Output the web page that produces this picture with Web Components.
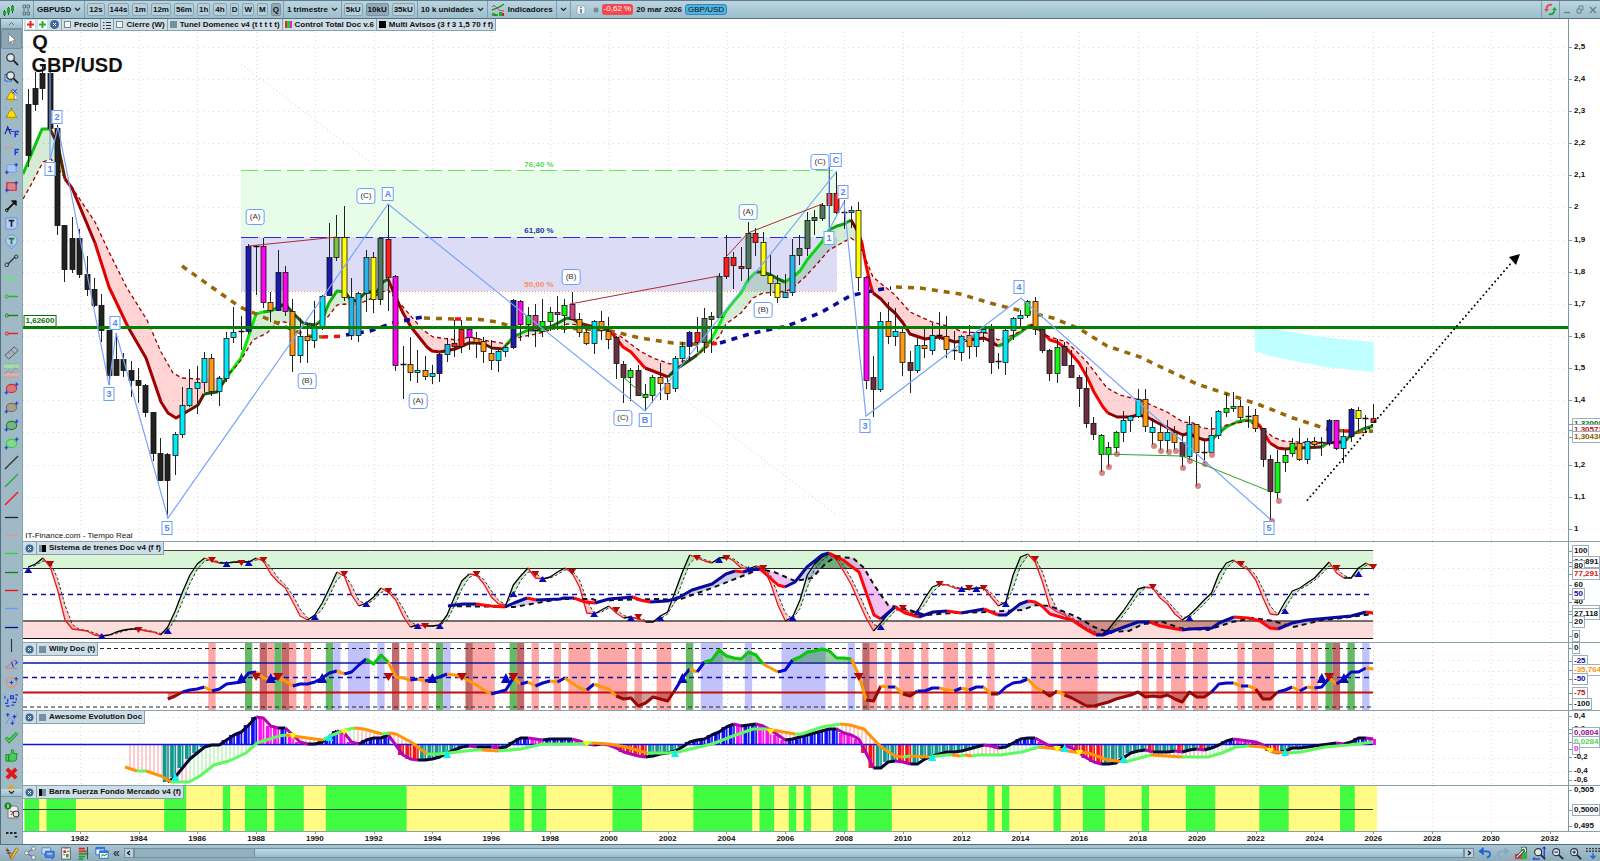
<!DOCTYPE html>
<html lang="es">
<head>
<meta charset="utf-8">
<title>GBPUSD - 1 trimestre</title>
<style>
    html, body { margin: 0; height: 100%; }
    body { font: bold 8px/10px "Liberation Sans", Arial, sans-serif; color: #111; background: #fff; overflow: hidden; }
</style>
</head>
<body>
<trading-window></trading-window>

<script>
// ---------- helpers ----------
const X0 = 28.2, STEP = 7.35;          // first quarter and quarter width
const qx = i => X0 + i * STEP;
const nums = s => s.trim().split(/[\s,]+/).map(Number);
const pairs = s => { const n = nums(s), out = []; for (let i = 0; i < n.length; i += 2) out.push([n[i], n[i + 1]]); return out; };
const series = (start, s) => nums(s).map((y, i) => [qx(start + i), y]);
const pts = list => list.map(p => p[0].toFixed(1) + "," + p[1].toFixed(1)).join(" ");
const line = (list, color, w = 1, extra = "") => `<polyline points="${pts(list)}" fill="none" stroke="${color}" stroke-width="${w}" ${extra}/>`;
const rect = (x, y, w, h, fill, extra = "") => `<rect x="${x}" y="${y}" width="${w}" height="${h}" fill="${fill}" ${extra}/>`;

function at(list, x) {
    if (x <= list[0][0]) return list[0][1];
    for (let i = 1; i < list.length; i++) {
        if (x <= list[i][0]) {
            const a = list[i - 1], b = list[i];
            return a[1] + (b[1] - a[1]) * (x - a[0]) / (b[0] - a[0]);
        }
    }
    return list[list.length - 1][1];
}

// a line whose segments take their colour from a rule
function ruled(list, rule, w) {
    let out = "", run = [list[0]], color = null;
    for (let i = 1; i < list.length; i++) {
        const c = rule(list[i - 1], list[i]);
        if (color && c !== color) {
            out += line(run, color, w, 'stroke-linejoin="round"');
            run = [list[i - 1]];
        }
        color = c;
        run.push(list[i]);
    }
    return out + line(run, color, w, 'stroke-linejoin="round"');
}

// fills the space between two lines: one colour when a is over b, other when under
function between(a, b, over, under) {
    const from = Math.max(a[0][0], b[0][0]);
    const to = Math.min(a[a.length - 1][0], b[b.length - 1][0]);
    let out = "", top = [], low = [], sign = 0;
    const flush = () => {
        const color = sign > 0 ? over : under;
        if (top.length > 1 && color !== "none") out += `<polygon points="${pts(top)} ${pts(low.reverse())}" fill="${color}"/>`;
    };
    for (let x = from; x <= to; x += 1) {
        const ya = at(a, x), yb = at(b, x), s = ya <= yb ? 1 : -1;
        if (s !== sign) {
            flush();
            top = []; low = [];
            sign = s;
        }
        top.push([x, ya]);
        low.push([x, yb]);
    }
    flush();
    return out;
}

const up = (x, y, w, h, c) => `<polygon points="${x - w},${y + h} ${x + w},${y + h} ${x},${y - h}" fill="${c}"/>`;
const down = (x, y, w, h, c) => `<polygon points="${x - w},${y - h} ${x + w},${y - h} ${x},${y + h}" fill="${c}"/>`;
const spans = s => s.split(" ").map(t => { const p = t.split("-").map(Number); return [p[0], p[p.length - 1]]; });
const bands = (s, y, h, color) => spans(s).map(([a, b]) => rect((qx(a) - 3.7).toFixed(1), y, ((b - a + 1) * STEP).toFixed(1), h, color)).join("");
const yearGrid = (y1, y2) => {
    let out = "";
    for (let k = 0; k < 26; k++) {
        const x = Math.round(79.7 + 58.8 * k) + 0.5;
        out += `<line x1="${x}" x2="${x}" y1="${y1}" y2="${y2}" stroke="#dcdcdc" stroke-dasharray="1 3"/>`;
    }
    return out;
};
const hGrid = ys => ys.map(y => `<line x1="23" x2="1568" y1="${Math.round(y) + 0.5}" y2="${Math.round(y) + 0.5}" stroke="#dedede" stroke-dasharray="1 4"/>`).join("");
const level = (y, color, w, dash = "") => `<line x1="23" x2="1373" y1="${y}" y2="${y}" stroke="${color}" stroke-width="${w}" ${dash && `stroke-dasharray="${dash}"`}/>`;

function define(name, css, html, cls = class extends HTMLElement {}) {
    const t = document.createElement("template");
    t.innerHTML = `<style>*{box-sizing:border-box}svg{display:block;flex:none}${css}</style>${html}`;
    window.customElements.define(name, class extends cls {
        constructor() {
            super();
            this.attachShadow({ mode: "open" });
            this.shadowRoot.appendChild(t.content.cloneNode(true));
            if (this.ready) this.ready(this.shadowRoot);
        }
    });
}

// ---------- icons ----------
const P = (d, c = "#222", w = 1.3, f = "none") => `<path d="${d}" stroke="${c}" stroke-width="${w}" fill="${f}"/>`;
const plus = (x, y) => P(`M${x - 2} ${y}h4M${x} ${y - 2}v4`, "#1a3ae0", 1.2);
const lens = P("M10 10l5 5", "#222", 2) + '<circle cx="7" cy="7" r="4" fill="#dde9ef" stroke="#333" stroke-width="1.3"/>';
const bell = '<path d="M2 12h12c-2-1-2-3-3-5-1-3-5-3-6 0-1 2-1 4-3 5z" fill="#ffe000" stroke="#8a7400" stroke-width=".8"/><path d="M6.500 3.500h3l-1.500-2z" fill="#8a7400"/><circle cx="8" cy="13.500" r="1.600" fill="#d8b400"/>';
const hline = c => P("M1 8h14", c, 1.4);
const diag = c => P("M1 15L15 1", c, 1.4);
const handle = c => P("M4 8h11", c, 1.5) + `<circle cx="3" cy="8" r="1.700" fill="none" stroke="${c}"/>`;
const oval = (c, f) => `<ellipse cx="8" cy="8" rx="5.500" ry="4.400" fill="${f}" stroke="${c}" stroke-width="1.200"/>` + plus(2.5, 12.5) + plus(13.5, 3.5);
const ICONS = {
    cursor: P("M5 2v10l2.600-2.300 1.800 4 1.500-.7-1.700-3.800h3.300z", "#777", .8, "#fff"),
    lens,
    lensbox: P("M1 6h7v7H1z", "#1a3ae0", 1, "none").replace("/>", ' stroke-dasharray="2 1"/>') + lens,
    bellcut: bell + P("M9 1l5 5M14 1l-5 5", "#1a3ae0", 1) + P("M11 6v7l2-1.500 2 2", "#777", .8, "#fff"),
    bell: bell + P("M1 4l2-2M15 4l-2-2", "#999", 1),
    trendF: P("M1 11l3-8 3 8M3 6h5", "#1a2a90", 1.2) + P("M7 8h4", "#1a3ae0", 1) + P("M12 14V8h4M12 11h3", "#1a3ae0", 1.500),
    lineF: P("M1 5h10", "#e09090", 1.200) + P("M12 13V7h4M12 10h3", "#1a3ae0", 1.500),
    bluebox: P("M3 4h10v8H3z", "#6f9cf0", 1, "#a9c6ec") + plus(3, 12) + plus(13, 4),
    redbox: P("M3 4h10v8H3z", "#e02030", 1.300, "#d08a92") + plus(3, 12) + plus(13, 4),
    arrow: P("M3 13L11 5", "#111", 1.800) + P("M8 3h5v5z", "#111", 1, "#111") + '<circle cx="3" cy="13" r="1.500" fill="none" stroke="#111"/>',
    note: P("M2 2h12v9l-3 3H2z", "#5f94f0", 1, "#b8d0ee") + P("M5 5h6M8 5v6.500", "#222", 1.800),
    balloon: '<circle cx="8" cy="7" r="6" fill="#b8d0ee" stroke="#5f94f0"/>' + P("M6 13l2 3 2-3", "#5f94f0", 1, "#b8d0ee") + P("M5 5h6M8 5v6", "#1d7a2a", 1.800),
    segment: P("M4 12l8-8", "#333", 1.300) + '<circle cx="3" cy="12.500" r="2" fill="none" stroke="#333"/><circle cx="13" cy="4" r="1.800" fill="none" stroke="#333"/>',
    h1: handle("#66ee66"), h2: handle("#22bb22"), h3: handle("#118811"), h4: handle("#ee2020"),
    ruler: P("M1 11L11 2l4 4L5 15z", "#555", 1, "#a6b8c2") + P("M5 8l1.500 1.500M8 5.500l1.500 1.500M11 9l-2-2", "#555", .8),
    bandchart: rect(0, 1, 16, 5, "#a5dca5") + rect(0, 10, 16, 5, "#e8a9a9") + P("M1 12l4-5 3 4 4-6 3 3", "#89a", 1) + P("M0 1h16M0 6h16M0 10h16M0 15h16", "#6a9a7a", .7).replace("/>", ' stroke-dasharray="1 1"/>'),
    o1: oval("#ee2222", "#c88088"), o2: oval("#8a6a40", "#a0a490"), o3: oval("#118822", "#80b090"), o4: oval("#22dd22", "#90d0a0"),
    d1: diag("#333"), d2: diag("#22aa33"), d3: diag("#ff1010"),
    l1: hline("#222"), l2: hline("#f09090"), l3: hline("#20e020"), l4: hline("#0a8a0a"), l5: hline("#f01010"), l6: hline("#6a9af0"), l7: hline("#0a0aa0"),
    vert: P("M8 1v14", "#333", 1.200),
    angle: P("M2 13h12M2 13L12 3", "#e07878", 1.200) + P("M8 6l2 6M12 5l2 2-2 2", "#1a3ae0", 1.200),
    circle: '<circle cx="8" cy="8" r="5.500" fill="none" stroke="#f08a60" stroke-width="1.300"/>' + plus(8, 8) + plus(13, 4),
    fib: P("M1 3v3M4 6v4M1 11h3M7 3h3v3H7zM9 10h4M12 2h3M13 5v3M2 14h4M8 13h3", "#1a3ae0", 1.300),
    wave: P("M2 14l4-7 4 4 4-9", "#7090e0", 1) + plus(4, 4) + plus(11, 6) + plus(9, 13),
    check: P("M2 8l3.500 4L14 3", "#1d8a2a", 3.500) + P("M2 8l3.500 4L14 3", "#46d058", 2),
    thumb: P("M2 7h3v7H2zM5 8l3-3V2c2-1 3 1 2 4h4l-1 7-2 1H5z", "#1d8a2a", 1, "#46d058"),
    cross: P("M3 3l10 10M13 3L3 13", "#e01818", 4)
};
const svg = (body, size = 15) => `<svg width="${size}" height="${size}" viewBox="0 0 16 16" aria-hidden="true">${body}</svg>`;

const CHEV = '<svg width="7" height="5" viewBox="0 0 7 5" aria-hidden="true"><path d="M1 1l2.500 2.500L6 1" fill="none" stroke="#222" stroke-width="1.200"/></svg>';

// ---------- toolbar ----------
define("tf-button", `
    :host { display: block; }
    button { display: block; font: inherit; color: inherit; height: 13px; padding: 0 1px; border: 1px solid #88a5b4; border-radius: 2px; background: #b5cfda; }
    :host([active]) button { background: #8fa9b6; border-color: #7791a0; }`,
    `<button type="button"><slot></slot></button>`);

define("top-toolbar", `
    :host { display: flex; align-items: stretch; height: 19px; border-top: 1px solid #5f7c8c; border-bottom: 1px solid #56707f; background: linear-gradient(#bad5e0, #9dbecc); }
    .group { display: flex; align-items: center; gap: 3px; padding: 0 2px; border-right: 1px solid #809eac; white-space: nowrap; }
    .plain { border-right: 0; }
    .info { padding: 0 5px; }
    button { display: flex; align-items: center; gap: 3px; border: 0; padding: 0 1px; background: none; font: inherit; color: inherit; white-space: nowrap; }
    .tag { padding: 0 2px; height: 11px; border-radius: 3px; font-weight: normal; }
    .fall { background: #f5484e; color: #fff; }
    .pair { background: #4fb2e2; border: 1px solid #2f87b5; line-height: 9px; }
    .end { margin-left: auto; border-left: 1px solid #809eac; }`, `
    <div class="group plain"><svg width="13" height="14" viewBox="0 0 13 14"><path d="M2.500 7v6M6.500 4v8M10.500 2v8" stroke="#18541c"/><path d="M1 8h3v4H1zM5 5h3v5H5zM9 3h3v5H9z" fill="#28a030"/></svg></div>
    <div class="group" style="padding-left:5px"><svg width="9" height="12" viewBox="0 0 9 12"><path d="M1 1h2.500v3H1zM5 1h2.500v3H5zM1 8h2.500v3H1zM5 8h2.500v3H5zM2 5v2M6 5v2" fill="none" stroke="#5c707c"/></svg></div>
    <div class="group"><button type="button">GBPUSD ${CHEV}</button></div>
    <div class="group">
        <tf-button>12s</tf-button><tf-button>144s</tf-button><tf-button>1m</tf-button><tf-button>12m</tf-button><tf-button>56m</tf-button>
        <tf-button>1h</tf-button><tf-button>4h</tf-button><tf-button>D</tf-button><tf-button>W</tf-button><tf-button>M</tf-button><tf-button active>Q</tf-button>
    </div>
    <div class="group"><button type="button">1 trimestre ${CHEV}</button></div>
    <div class="group"><tf-button>5kU</tf-button><tf-button active>10kU</tf-button><tf-button>35kU</tf-button></div>
    <div class="group"><button type="button">10 k unidades ${CHEV}</button></div>
    <div class="group"><button type="button"><svg width="14" height="14" viewBox="0 0 14 14"><path d="M1 4c3-5 5 5 12 4" fill="none" stroke="#e03030"/><path d="M1 7c4-2 6-1 12-6" fill="none" stroke="#208a30" stroke-width="1.400"/><path d="M1 10h3v3H1zM5 11h2v2H5zM8 9h3v4H8z" fill="#18b030"/><path d="M4 11h1v2H4zM11 10h2v3h-2z" fill="#d02020"/></svg>Indicadores</button></div>
    <div class="group"><button type="button" aria-label="Más indicadores">${CHEV}</button></div>
    <div class="group plain info">
        <svg width="14" height="10" viewBox="0 0 14 10"><path d="M1 1h8v8H1z" fill="#eef4f6" stroke="#8da1ac" stroke-width=".7"/><path d="M5 2v1M5 4v4" stroke="#666" stroke-width="1.500"/></svg>
        <svg width="6" height="8" viewBox="0 0 6 8"><circle cx="3" cy="4" r="2.500" fill="#7b8890"/></svg>
        <span class="tag fall">-0,62 %</span><span>20 mar 2026</span><span class="tag pair">GBP/USD</span>
    </div>
    <div class="group end"><svg width="13" height="13" viewBox="0 0 13 13"><path d="M8 2C4 1 2 4 2.500 7" fill="none" stroke="#f04848" stroke-width="2"/><path d="M0 6h5L2.500 9z" fill="#f04848"/><path d="M5 11c4 1 6-2 5.500-5" fill="none" stroke="#20a830" stroke-width="2"/><path d="M8 7h5l-2.500-3z" fill="#20a830"/></svg></div>
    <div class="group plain">
        <button type="button" aria-label="Minimizar"><svg width="8" height="9"><path d="M1 7.500h6" stroke="#64808e" stroke-width="1.300"/></svg></button>
        <button type="button" aria-label="Restaurar"><svg width="8" height="9"><path d="M1 4h4v4H1zM3 4V1h4v4H5" fill="none" stroke="#64808e"/></svg></button>
        <button type="button" aria-label="Cerrar"><svg width="8" height="9"><path d="M1 2l6 6M7 2L1 8" stroke="#64808e" stroke-width="1.300"/></svg></button>
    </div>`);

define("draw-tools", `
    :host { display: flex; flex-direction: column; background: #9fb9c6; border-left: 1px solid #526d7d; border-right: 1px solid #8aa3b0; }
    button { display: grid; place-items: center; border: 0; padding: 0; background: none; min-height: 0; overflow: hidden; }
    .edge { background: linear-gradient(#c2dae4, #9dbccb); border-bottom: 1px solid #7893a1; }
    .tools { flex: 1; min-height: 0; display: flex; flex-direction: column; }
    .tools button { flex: 1; }
    .tools button:first-child { background: #8ca6b3; border: 1px solid #74909e; border-radius: 2px; }
    .more { height: 20px; }`, `
    <button type="button" class="edge" style="height:10px" aria-label="Subir"><svg width="7" height="5"><path d="M1 4l2.500-2.500L6 4" fill="none" stroke="#5c7684"/></svg></button>
    <div class="tools"></div>
    <svg width="20" height="6" viewBox="0 0 20 6"><path d="M6 6l4-5 4 5z" fill="#f0a020"/></svg>
    <button type="button" class="edge" style="height:8px" aria-label="Bajar">${CHEV}</button>
    <button type="button" style="height:27px" aria-label="Objetos"><svg width="16" height="18" viewBox="0 0 16 18"><path d="M4 4h8l2 2v10H4z" fill="#eee" stroke="#777"/><circle cx="4" cy="4" r="3.500" fill="#188a28"/><path d="M4 2v4" stroke="#fff"/><path d="M6 9l5 2 3 4M7 13l3-4" stroke="#a33" fill="none"/><circle cx="12" cy="12" r="3" fill="#ddd" stroke="#333"/></svg></button>
    <button type="button" class="more" aria-label="Más"><svg width="14" height="10"><path d="M1 4h2.500M5 4h2.500M9 4h2.500" stroke="#222" stroke-width="2"/><path d="M9 7h4l-2 2z" fill="#222"/></svg></button>`,
    class extends HTMLElement {
        ready(root) {
            root.querySelector(".tools").innerHTML = Object.keys(ICONS).map(k => `<button type="button" aria-label="${k}">${svg(ICONS[k])}</button>`).join("");
        }
    });

// ---------- chart titles ----------
define("pane-title", `
    :host { display: flex; height: 13px; position: relative; width: max-content; border-bottom: 1px solid #8aa0ac; background: #cddee6; }
    button { width: 14px; padding: 0; border: 0; border-right: 1px solid #8aa0ac; background: none; display: grid; place-items: center; }
    div { display: flex; align-items: center; gap: 3px; padding: 0 2px; border-right: 1px solid #8aa0ac; white-space: nowrap; }
    i { width: 7px; height: 7px; background: var(--chip, #75909c); }`, `
    <button type="button" aria-label="Cerrar"><svg width="9" height="9"><circle cx="4.500" cy="4.500" r="4" fill="#3f6a98"/><path d="M3 3l3 3M6 3L3 6" stroke="#fff"/></svg></button>
    <div><i></i><slot></slot></div>`);

define("indicator-tabs", `
    :host { display: flex; position: relative; height: 12px; width: max-content; margin-left: 1px; border-bottom: 1px solid #8aa0ac; background: #cddee6; }
    div, label { display: flex; align-items: center; gap: 3px; padding: 0 2px; border-right: 1px solid #8aa0ac; white-space: nowrap; }
    input { appearance: none; width: 7px; height: 7px; margin: 0; border: 1px solid #7b8a92; background: #eef4f7; }
    i { width: 7px; height: 7px; background: #75909c; }
    .rgb { background: linear-gradient(90deg, #f02828 33%, #18d038 33% 66%, #f020c0 66%); }
    .black { background: #000; }
    button { border: 0; padding: 0; background: none; display: block; height: 9px; }`, `
    <div>
        <button type="button" aria-label="Añadir venta"><svg width="9" height="9"><rect width="9" height="9" fill="#fff"/><path d="M4.500 1v7M1 4.500h7" stroke="#e02828" stroke-width="2"/></svg></button>
        <button type="button" aria-label="Añadir compra"><svg width="9" height="9"><rect width="9" height="9" fill="#fff"/><path d="M4.500 1v7M1 4.500h7" stroke="#20b030" stroke-width="2"/></svg></button>
        <button type="button" aria-label="Quitar"><svg width="9" height="9"><circle cx="4.500" cy="4.500" r="4.500" fill="#3f6a98"/><path d="M3 3l3 3M6 3L3 6" stroke="#fff"/></svg></button>
    </div>
    <label><input type="checkbox">Precio</label>
    <div><svg width="8" height="8"><path d="M0 1.500h1.500M3 1.500h5M0 4.500h1.500M3 4.500h5M0 7.500h1.500M3 7.500h5" stroke="#333"/></svg></div>
    <label><input type="checkbox">Cierre (W)</label>
    <div><i></i>Tunel Domenec v4 (t t t t t)</div>
    <div><i class="rgb"></i>Control Total Doc v.6</div>
    <div><i class="black"></i>Multi Avisos (3 f 3 1,5 70 f f)</div>`);

// ---------- panes ----------
const PANE_CSS = `
    :host { display: block; position: relative; min-width: 0; overflow: hidden; background: #fff; }
    svg.plot { position: absolute; inset: 0; width: 100%; height: 100%; display: block; }
    .marks { position: absolute; inset: 0; }
    .marks span { position: absolute; transform: translate(-50%, -50%); white-space: nowrap; }
    .w { border: 1px solid #6f9dfa; background: #fff; color: #5588f0; font-size: 9px; line-height: 12px; padding: 0 2px; }
    .r { border: 1px solid #6f9dfa; border-radius: 3px; background: #fff; color: #333; font-weight: normal; line-height: 14px; padding: 0 3px; }
    .fib { line-height: 10px; }`;

class Pane extends HTMLElement {
    ready(root) {
        const [x, y, w, h] = this.box;
        const marks = this.marks ? this.marks() : [];
        root.querySelector("svg").setAttribute("viewBox", this.box.join(" "));
        root.querySelector("svg").innerHTML = this.draw();
        root.querySelector(".marks").innerHTML = marks.map(([mx, my, text, cls, style = ""]) =>
            `<span class="${cls}" style="left:${((mx - x) / w * 100).toFixed(2)}%;top:${((my - y) / h * 100).toFixed(2)}%;${style}">${text}</span>`).join("");
    }
}
const PANE_HTML = `<svg class="plot" preserveAspectRatio="none"></svg><div class="marks"></div><slot></slot>`;

// colour, high, body top, body bottom, low; one per quarter
const CANDLES = `
k 89 104 155 167;k 72 88 104 111;k 65 73 88 100;k 66 73 128 128;k 125 128 225 235;k 225 225 269 282;k 217 238 269 273;k 229 238 274 278;
k 256 274 289 296;k 278 289 305 307;k 294 305 330 342;k 330 330 375 385;k 333 359 375 375;k 353 359 370 377;k 361 370 380 397;k 368 380 385 403;
k 384 385 412 417;k 412 412 453 461;k 438 453 480 481;k 453 454 480 518;c 432 434 455 475;c 387 405 434 438;c 369 388 405 407;c 366 382 388 414;
c 352 358 382 392;o 354 358 391 396;c 376 378 391 406;c 332 338 378 382;c 307 332 337 343;c 316 331 332 350;b 244 246 331 334;k 245 246 246 295;
m 238 246 302 308;o 292 302 310 322;b 250 272 310 311;m 266 272 311 316;o 299 311 355 372;c 318 336 355 363;o 323 336 340 363;c 301 328 340 348;
c 295 296 328 330;b 223 257 295 296;l 215 237 257 261;y 206 237 297 301;a 278 297 335 340;a 292 293 335 342;a 250 257 293 312;y 252 257 299 313;
G 237 238 299 305;r 204 239 277 311;m 275 276 365 371;c 346 364 365 399;o 337 364 372 381;c 350 370 372 383;o 356 370 376 380;c 365 373 376 384;
b 353 354 373 382;a 338 344 354 362;r 320 343 346 357;r 320 329 346 353;m 327 329 337 350;o 332 338 342 358;o 337 341 351 363;o 340 353 360 370;
c 350 351 360 372;c 345 347 351 357;b 299 300 347 349;m 300 301 324 341;g 307 315 324 337;p 304 315 330 347;g 299 321 331 337;g 307 312 321 331;
p 296 312 314 330;g 299 305 315 333;p 292 304 319 320;o 313 319 332 337;o 328 332 343 345;c 320 321 343 354;o 311 321 330 340;o 317 331 339 349;
n 336 337 363 379;n 361 364 377 403;g 368 370 377 401;n 365 370 395 396;g 384 394 397 410;g 375 377 395 403;o 363 377 383 400;o 378 383 393 400;
c 356 358 388 392;c 342 346 358 363;b 331 332 346 360;r 317 332 342 352;G 308 318 342 353;G 312 316 319 353;G 273 276 317 318;r 235 257 276 279;
r 252 257 265 289;r 247 266 268 281;G 222 233 268 283;r 228 233 242 256;y 232 242 275 276;y 255 275 283 296;y 275 283 297 303;a 274 292 297 298;
a 239 255 292 296;G 235 248 255 265;G 212 220 248 256;G 210 217 220 235;G 203 205 218 221;r 167 193 205 228;r 171 193 212 214;k 200 212 212 229;
a 206 210 212 228;y 202 210 277 291;m 276 277 380 389;n 356 377 389 417;c 312 321 389 392;o 302 321 336 344;c 308 331 336 346;o 328 332 362 376;
n 351 362 370 393;c 338 345 370 373;o 329 345 348 358;c 323 335 350 355;k 312 335 335 340;o 316 336 349 358;k 331 350 350 360;c 335 336 352 361;
o 325 335 346 359;c 331 332 346 357;c 327 329 332 342;n 324 329 362 374;k 353 361 361 369;c 328 330 362 375;c 317 318 330 340;c 310 315 318 326;
g 300 301 315 318;o 297 301 329 335;n 329 329 350 353;n 349 350 373 381;g 339 347 373 383;n 342 346 365 365;n 350 365 377 377;n 375 377 388 407;
n 367 388 423 428;n 417 423 434 440;g 434 435 454 472;g 442 447 454 467;g 431 432 447 453;c 411 420 432 442;c 415 416 420 432;c 389 399 416 418;
o 389 399 426 432;c 418 427 432 445;o 423 432 440 450;c 420 432 440 452;o 426 432 442 450;n 433 442 456 467;c 416 424 456 460;o 424 424 452 486;
k 440 452 452 463;c 417 435 452 453;c 410 411 435 439;g 393 408 412 417;g 392 406 408 412;o 400 406 417 420;k 406 416 416 428;o 409 415 428 432;
n 428 428 459 467;n 455 459 491 520;g 450 462 492 499;g 449 455 462 472;g 438 443 453 457;o 428 443 459 461;c 438 441 459 464;o 437 441 444 449;
k 437 442 442 456;b 419 420 443 446;m 420 420 448 450;c 429 436 448 463;b 408 409 436 442;y 407 410 418 432;k 415 418 418 433;r 404 418 422 423`;
const FILL = { k: "#222", c: "#00eaf8", o: "#ff9a10", b: "#1a1aae", m: "#ff00f0", y: "#ffff00", a: "#28b4e8", G: "#4f7a5a", g: "#14f514", r: "#ff1c1c", p: "#d83a8c", n: "#6b3040", l: "#7cc242" };

const FAST = pairs(`23 174 42 129 50 129 58 145 65 179 72 188 95 243 109 287 128 327 146 358 161 402 168 413 176 418 183 414 198 405 204 394 217 392 227 377 241 358 249 335
256 314 263 312 271 311 278 307 285 304 293 313 303 323 308 324 315 325 322 320 329 303 337 291 345 292 351 300 357 301 366 292 377 292 383 282 388 279 397 300 403 313 411 327
427 347 432 351 440 352 455 349 469 343 477 343 484 344 492 348 503 349 513 337 528 330 543 330 550 327 558 323 567 318 573 319 579 323 594 327 609 330 616 338 623 347 631 352
638 360 645 368 653 371 668 377 675 370 690 360 697 355 705 347 711 340 719 325 726 311 734 301 741 293 748 280 756 272 763 272 771 275 778 279 785 282 793 277 800 271 807 260
822 242 829 230 837 226 844 224 851 220 857 230 862 243 866 265 870 283 873 293 881 299 888 307 895 313 903 323 910 334 925 339 939 337 955 342 969 340 984 338 990 341 998 346
1006 343 1013 337 1021 332 1030 325 1038 328 1050 340 1057 342 1068 350 1079 363 1087 377 1094 392 1103 407 1108 413 1117 417 1130 417 1138 415 1147 417 1158 423 1170 429
1183 435 1189 433 1195 437 1205 440 1212 439 1219 433 1226 427 1237 422 1247 420 1255 422 1260 426 1265 435 1270 443 1278 448 1285 449 1299 448 1322 447 1327 443 1344 442
1351 435 1363 429 1373 426`);
const SLOW = pairs(`23 199 32 183 43 162 51 159 65 178 77 195 95 222 109 252 127 288 147 320 161 352 173 373 182 378 197 379 223 378 233 370 241 360 253 340 267 333 278 322
285 322 297 328 313 327 327 318 337 305 345 304 353 306 368 300 382 292 388 290 397 300 410 315 423 330 433 337 457 340 470 337 483 340 507 344 520 337 537 334 560 327
567 324 580 325 607 330 620 336 640 351 653 358 670 364 687 360 700 353 719 337 726 324 741 313 753 298 763 293 780 292 790 290 803 279 817 264 829 250 851 238 858 243
866 260 873 277 895 295 910 312 932 322 947 326 963 332 987 333 998 340 1013 335 1030 326 1050 337 1067 342 1087 362 1107 388 1120 395 1140 400 1167 412 1183 422 1193 423
1202 428 1213 429 1227 425 1247 421 1260 427 1273 437 1283 441 1313 443 1333 443 1347 440 1357 433 1372 432`);
const FAST_COLORS = [[50, "#10c010"], [65, "#5a2800"], [90, "#a00000"], [128, "#e00000"], [183, "#a00000"], [204, "#5a1a00"], [228, "#105a10"], [262, "#08ea08"], [280, "#10b010"], [318, "#205020"],
    [346, "#10b010"], [389, "#186018"], [440, "#a00000"], [504, "#701000"], [528, "#10b010"], [573, "#0a7a0a"], [609, "#5a3010"], [648, "#f80000"], [670, "#a00000"], [697, "#105010"], [711, "#0aa00a"],
    [757, "#08f008"], [786, "#106a10"], [829, "#08d808"], [851, "#10a010"], [858, "#700000"], [874, "#f80000"], [998, "#8a0000"], [1030, "#10b010"], [1044, "#a00000"], [1109, "#f80000"],
    [1212, "#8a0000"], [1256, "#10b010"], [1271, "#f80000"], [1290, "#a00000"], [1323, "#5a2800"], [1328, "#10a010"], [1345, "#5a2000"], [1374, "#108a10"]];

define("price-pane", PANE_CSS + ".big{font-size:20px;line-height:22px}", PANE_HTML, class extends Pane {
    get box() { return [23, 19, 1545, 522]; }
    draw() {
        let s = yearGrid(32, 541) + hGrid(Array.from({ length: 16 }, (_, k) => 46.7 + 32.15 * k));
        s += line([[241, 64], [837, 515]], "#ccc", 1, 'stroke-dasharray="1 3"');
        // retracement zones
        s += rect(241, 170, 596, 67, "#e7fde7") + rect(241, 237, 596, 54, "#dddcf7");
        s += `<path d="M241 170.500h596" stroke="#66e866" stroke-dasharray="17 6"/><path d="M241 237.500h596" stroke="#2a2ad8" stroke-dasharray="17 6"/><path d="M241 291.500h596" stroke="#ff8a60" stroke-dasharray="1 2"/>`;
        s += `<polygon points="1255,328 1275,329 1310,335 1340,339 1374,342 1374,372 1325,367 1270,356 1255,351" fill="#c0ffff"/>`;
        s += between(FAST, SLOW, "rgba(40,160,40,.2)", "rgba(250,60,60,.22)");
        s += ruled(FAST, (a, b) => (FAST_COLORS.find(c => (a[0] + b[0]) / 2 < c[0]) || [0, "#108a10"])[1], 3);
        s += line(SLOW, "#a00000", 1.3, 'stroke-dasharray="4 3"');
        const gold = "#966808", navy = "#0a0a98";
        const far = (p, c) => line(pairs(p), c, 3.5, 'stroke-dasharray="6 6"');
        s += far("182 266 213 288 240 307 263 317 293 330 308 336 322 337", gold) + far("322 337 345 336", "#f01010");
        s += far("346 335 370 331 393 323 417 318 424 317", navy) + far("424 318 455 319", gold) + far("455 319 461 319", "#f01010") + far("466 319 477 319 497 322 513 327 560 328 607 330 640 338 673 343 709 345", gold);
        s += far("711 344 718 343", "#f01010") + far("720 343 753 333 787 326 820 313 850 296 866 292 888 288 891 288", navy);
        s += far("896 287 920 288 960 294 997 305 1027 312 1053 318 1080 329 1107 346 1140 357 1163 368 1197 384 1227 394 1260 405 1293 418 1327 429 1343 431", gold);
        s += far("1344 431 1355 431", "#f01010") + far("1357 432 1373 431", gold);
        // candles
        CANDLES.trim().split(";").forEach((row, i) => {
            const [c, ...v] = row.trim().split(" ");
            const [hi, top, bot, lo] = v.map(Number), x = Math.round(qx(i) - 0.5) + 0.5;
            s += `<path d="M${x} ${hi}V${lo}" stroke="#222" stroke-width="1"/>`;
            if (bot - top < 2) s += `<path d="M${x - 3} ${top + 0.5}h6" stroke="#111" stroke-width="1.5"/>`;
            else s += `<rect x="${x - 2.5}" y="${top + 0.5}" width="5" height="${bot - top}" fill="${FILL[c]}" stroke="#111" stroke-width=".8"/>`;
        });
        s += `<path d="M23 327.500H1568" stroke="#058005" stroke-width="3"/>`;
        [[1102, 473], [1109, 467], [1117, 454], [1154, 446], [1161, 451], [1169, 452], [1176, 451], [1183, 468], [1190, 461], [1198, 486], [1205, 464], [1212, 455], [1279, 501], [1272, 521]]
            .forEach(([x, y]) => { s += `<circle cx="${x}" cy="${y}" r="3" fill="rgba(190,70,70,.65)"/>`; });
        // waves and divergences
        const blue = p => line(pairs(p), "#7ba4fa", 1.2);
        s += blue("50 63 50 160 58 127 109 385 116 333 168 518 388 204 645 411 837 171") + blue("829 165 829 230 844 202 866 416 1021 298 1270 519");
        const red = p => line(pairs(p), "#b02838", 1);
        s += red("249 246 337 237") + red("570 304 719 276") + red("726 257 748 233 822 204");
        s += line(pairs("623 377 645 396"), "#109020") + line(pairs("1101 454 1182 456 1269 491"), "#30a030");
        // projection
        s += `<path d="M1307.500 500L1512 262" stroke="#000" stroke-width="2" stroke-linecap="round" stroke-dasharray="0 4.500"/><path d="M1509 257l11-3-4 11z"/>`;
        return s;
    }
    marks() {
        const w = [[50, 169, 1], [57, 117, 2], [109, 394, 3], [115, 323, 4], [167, 528, 5], [388, 194, "A"], [645, 420, "B"], [829, 238, 1], [843, 192, 2], [865, 426, 3], [1019, 287, 4], [1269, 528, 5]];
        const r = [[255, 217, "(A)"], [307, 381, "(B)"], [366, 196, "(C)"], [418, 401, "(A)"], [571, 277, "(B)"], [623, 418, "(C)"], [748, 212, "(A)"], [763, 310, "(B)"], [820, 162, "(C)"]];
        return [
            ...r.map(m => [...m, "r"]), [836, 160, "C", "w"], ...w.map(m => [...m, "w"]),
            [539, 165, "76,40 %", "fib", "color:#55d855"], [539, 231, "61,80 %", "fib", "color:#2a2ab8"], [539, 285, "50,00 %", "fib", "color:#ff8a60"],
            [40, 321, "1,62600", "fib", "color:#087008;border:1px solid #087008;background:#fff;padding:0 1px"],
            [40, 42, "Q", "big"], [77, 65, "GBP/USD", "big"],
            [79, 536, "IT-Finance.com - Tiempo Real", "", "font-weight:normal"]
        ];
    }
});

const CYCLE = series(0, `567 564 558 567 590 620 629 630 631 635 636 635 632 630 629 629 631 632 635 627 611 592 575 564 558 561 563 563 562 562 562 558 561 574 582 588 602 616 620 615
603 588 572 576 595 606 603 597 588 592 600 616 627 625 626 626 625 615 597 581 574 575 584 597 604 605 585 576 568 578 579 577 572 568 573 587 613 614 610 606 613 618 617 619
622 622 616 612 592 572 555 558 561 563 558 557 561 568 569 566 568 583 605 621 617 600 575 564 557 554 560 572 585 602 618 631 623 614 607 610 614 611 598 587 584 585 588 589
589 588 588 597 606 602 575 557 554 562 582 607 612 615 620 626 630 633 635 629 620 611 600 589 587 588 598 604 614 620 615 608 600 593 574 563 560 566 570 580 598 614 615 602
591 588 583 578 570 562 573 578 578 568 563 567`);
const TRAIN = pairs(`448 606 462 604 476 604 491 606 505 607 514 603 527 598 536 600 560 599 564 598 574 598 585 602 595 603 609 599 633 597 640 600 650 602 667 601 678 598 692 590
712 584 726 574 735 571 743 572 750 570 760 569 767 575 778 585 785 587 795 582 807 567 822 555 829 553 843 560 859 572 867 595 874 615 881 619 895 607 905 613 919 617 933 612
947 611 961 613 984 609 998 615 1006 615 1020 604 1028 601 1035 602 1042 606 1050 614 1064 618 1072 620 1087 630 1096 635 1103 635 1116 630 1138 622 1150 622 1160 626
1182 630 1190 629 1212 628 1219 623 1234 617 1248 618 1260 621 1270 628 1278 629 1292 623 1307 620 1329 618 1351 616 1366 612 1373 613`);
const TRAIN_LAG = pairs(`448 606 514 607 560 599 592 599 599 601 616 600 657 599 678 600 712 588 740 577 760 569 774 572 795 581 812 578 826 563 836 557 853 558 864 568 874 585
888 605 902 608 926 615 953 613 988 612 1022 610 1036 605 1050 606 1077 617 1094 627 1108 632 1129 631 1143 624 1163 622 1180 628 1208 630 1232 622 1253 618 1273 621 1294 627
1322 620 1342 618 1373 614`);

define("trains-pane", PANE_CSS, PANE_HTML, class extends Pane {
    get box() { return [23, 542, 1545, 100]; }
    draw() {
        let s = yearGrid(542, 642) + hGrid([568, 585, 603, 621]);
        s += rect(23, 551, 1350, 17, "#d8f5d8") + rect(23, 621, 1350, 17, "#fddcdc");
        s += level(550.5, "#444", 1) + level(568.5, "#222", 1) + level(594.5, "#1010a8", 1.5, "5 4") + level(621, "#444", 1.5) + level(638.5, "#111", 1);
        const lag = CYCLE.map((p, i) => [p[0], i ? (p[1] + CYCLE[i - 1][1]) / 2 : p[1]]);
        s += between(CYCLE, lag, "rgba(60,190,60,.28)", "rgba(240,60,60,.28)");
        s += between(TRAIN, TRAIN_LAG, "rgba(90,90,200,.3)", "rgba(220,80,220,.35)");
        s += between(TRAIN, [[815, 568], [858, 568]], "rgba(20,120,50,.55)", "none");
        s += between(TRAIN, [[1072, 621], [1290, 621]], "none", "rgba(150,50,30,.45)");
        s += line(lag, "#333", 1, 'stroke-dasharray="3 2"');
        s += ruled(CYCLE, (a, b) => b[1] <= a[1] ? "#000" : "#e81c1c", 1.3);
        s += line(TRAIN_LAG, "#111", 2, 'stroke-dasharray="5 4"');
        s += ruled(TRAIN, (a, b) => b[1] <= a[1] ? "#0a0a98" : "#fc0808", 3);
        pairs("0 570 10 636 19 631 27 564 30 563 39 617 46 604 53 626 56 626 66 594 70 579 77 614 82 618 86 618 94 560 98 569 104 618 116 627 121 612 127 589 129 589 133 604 147 631 158 618 171 611 181 574")
            .forEach(([i, y]) => { s += up(qx(i), y, 4, 3, "#0808b8"); });
        pairs("3 564 15 630 25 560 29 563 32 560 43 574 49 591 54 626 61 574 69 574 74 572 80 610 83 617 91 558 95 558 100 568 110 558 119 608 124 584 128 588 130 588 137 559 153 587 165 564 178 568 183 567")
            .forEach(([i, y]) => { s += down(qx(i), y, 4, 3, "#b80808"); });
        return s;
    }
});

const WILLY = series(19, `699 696 692 690 689 687 691 689 684 683 682 673 672 678 679 678 681 686 684 684 682 678 673 671 674 672 665 659 664 655 662 677 678 680 679 681 679 677 674 675
677 681 685 690 694 692 690 678 684 682 686 683 681 682 678 683 688 690 684 687 689 696 699 698 706 703 697 699 701 690 678 669 672 662 660 650 656 658 659 652 655 664 668 672
670 660 657 652 651 649 651 658 658 659 675 700 701 686 687 687 694 696 691 691 688 688 690 691 688 690 687 687 694 694 687 683 682 679 687 691 696 691 695 698 702 706 706 704
702 699 697 695 692 697 696 697 695 699 702 692 697 697 692 684 683 683 686 686 689 699 699 692 690 687 691 687 688 687 678 684 679 672 672 668 669`);

define("willy-pane", PANE_CSS, PANE_HTML, class extends Pane {
    get box() { return [23, 643, 1545, 67]; }
    draw() {
        let s = yearGrid(643, 710) + hGrid([660, 671, 684, 698]);
        s += bands("25 33 36 38 52 54 61-63 69 72 74-76 78-81 83 86-87 115 117 119-120 122 125-126 128 131 137-139 141-145 152 154 156-157 159-160 165 167-169 173 175", 643, 67, "#fca6a6");
        s += bands("30 34 41 56 66 90 177 180", 643, 67, "#66ba66") + bands("32 35 50 60 67 114 178", 643, 67, "#c46a6a");
        s += bands("42 44-46 48 57 92-94 98 103-108 112 182", 643, 67, "#c1c1fc");
        s += level(648.5, "#222", 1, "4 3") + level(663, "#1212a0", 1.5) + level(677.5, "#1010a8", 1.5, "5 4") + level(692.5, "#c01010", 1.8) + level(707, "#222", 1, "4 3");
        s += between(WILLY, [[170, 663], [1373, 663]], "rgba(20,130,40,.4)", "none");
        s += between(WILLY, [[167, 693], [1373, 693]], "none", "rgba(140,10,10,.4)");
        s += ruled(WILLY, (a, b) => {
            const m = (a[1] + b[1]) / 2;
            if (m < 662) return "#08c808";
            if (m > 693) return "#980808";
            return b[1] <= a[1] ? "#0808c8" : "#ff9808";
        }, 3);
        [29, 33, 40, 55, 65, 89, 176, 179].forEach(i => { s += up(qx(i), 678, 5, 5, "#0808b8"); });
        [31, 34, 49, 59, 66, 113, 177].forEach(i => { s += down(qx(i), 677, 5, 4, "#b80808"); });
        return s;
    }
});

const AO = series(19, `782 777 768 759 753 747 745 745 740 735 732 725 717 718 726 728 728 735 742 744 744 742 737 731 733 742 744 740 738 738 735 745 755 759 760 760 759 757 753 750
747 746 747 747 747 748 747 742 738 738 739 740 739 739 739 739 741 744 745 744 745 748 752 754 756 757 756 754 753 751 747 742 740 739 735 732 727 724 726 725 724 726 730 735
740 739 737 735 733 731 729 729 733 735 739 753 768 768 762 761 762 764 764 759 756 754 752 752 751 749 747 745 746 748 747 743 739 738 738 742 746 747 746 748 753 758 762 764
764 763 758 753 751 750 752 752 752 751 752 750 749 750 748 745 741 739 740 741 742 745 751 753 751 748 748 747 746 745 744 743 744 742 738 738 739`);
const SIGNAL = pairs(`125 767 137 771 146 771 161 776 171 782 179 782 189 782 200 776 214 765 229 761 246 753 257 743 279 736 286 735 300 737 323 740 330 736 345 730 354 728 364 729
382 734 389 733 396 734 411 742 427 754 439 754 475 750 482 750 498 751 521 749 543 744 560 744 574 744 592 743 609 744 626 747 647 753 667 753 678 752 712 744 733 736 753 729
767 729 795 734 802 734 822 727 840 724 850 725 864 729 881 747 895 756 903 757 910 756 929 757 946 755 952 755 960 756 965 755 972 756 978 755 1001 755 1022 752 1039 747
1057 749 1074 752 1088 753 1108 760 1125 762 1136 759 1151 755 1182 757 1208 757 1222 753 1236 747 1249 746 1263 747 1275 752 1289 753 1301 752 1325 747 1349 745 1373 742`);

define("awesome-pane", PANE_CSS, PANE_HTML, class extends Pane {
    get box() { return [23, 711, 1545, 74]; }
    draw() {
        let s = yearGrid(711, 785) + hGrid([717, 731, 758, 772]);
        const bar = (x, y, w, c) => rect((x - w / 2).toFixed(1), Math.min(y, 744).toFixed(1), w, Math.abs(y - 744).toFixed(1), c);
        for (let x = 130; x < 1372; x += 4) {
            const y = at(SIGNAL, x);
            s += bar(x, y, 2, y < at(SIGNAL, x - 4) ? "#cdf6cd" : "#fbcdcd");
        }
        AO.forEach(([x, y], i) => {
            const rise = i === 0 || y <= AO[i - 1][1];
            s += bar(x - 2, y, 6, y < 744 ? (rise ? "#1010f8" : "#ff10f0") : (rise ? "#109890" : "#f81414"));
            s += bar(x - 1, y, 1, "rgba(255,255,255,.6)");
        });
        s += `<path d="M23 744.500H1373" stroke="#1010e0" stroke-width="1.700"/>`;
        s += ruled(AO, (a, b) => b[1] <= a[1] ? "#080830" : "#b408b4", 3);
        s += ruled(SIGNAL, (a, b) => b[1] <= a[1] ? "#60f860" : "#ff9408", 3);
        pairs("20 777 41 737 57 754 88 753 123 757 141 748 149 759 171 752").forEach(([i, y]) => { s += up(qx(i), y, 4, 4, "#08f0f8"); });
        pairs("36 736 43 732 76 744 101 732 140 749 143 753 169 751").forEach(([i, y]) => { s += down(qx(i), y, 4, 3, "#fcf808"); });
        return s + rect(1373, 739, 3, 6, "#f010f0");
    }
});

define("strength-pane", PANE_CSS, PANE_HTML, class extends Pane {
    get box() { return [23, 786, 1545, 45]; }
    draw() {
        return yearGrid(786, 831) + rect(24, 786, 1353, 45, "#fffb85")
            + bands("0-1 3-6 19-21 27 30-32 34-37 41-51 66-67 69-70 80-83 91-98 100-101 104 106 110-111 113-117 131 133 140 144-146 152 158-161 168-171 179-180", 786, 45, "#40fc40")
            + `<path d="M23 809.500H1373" stroke="#224422" stroke-width="1.200"/>`;
    }
});

// ---------- axes ----------
define("value-axis", `
    :host { display: block; position: relative; flex: 0 0 32px; border-left: 1px solid #7b98a8; overflow: hidden; background: #fff; }
    span { position: absolute; left: 4px; transform: translateY(-50%); white-space: nowrap; padding: 0 1px; }
    i { position: absolute; left: 0; width: 3px; height: 1px; background: #7b98a8; }
    .box { border: 1px solid #9ab0bc; background: #fff; left: 3px; }`, `<div></div>`,
    class extends HTMLElement {
        // rows: "y|text|colour|box" separated by ";", y relative to the pane
        connectedCallback() {
            const h = Number(this.getAttribute("span"));
            this.shadowRoot.querySelector("div").innerHTML = this.getAttribute("rows").split(";").map(r => {
                const [y, text, color, box] = r.split("|"), top = (y / h * 100).toFixed(2);
                return `<i style="top:${top}%"></i><span class="${box ? "box" : ""}" style="top:${top}%;color:${color || "#111"}">${text}</span>`;
            }).join("");
        }
    });

define("time-axis", `
    :host { display: block; position: relative; height: 12px; margin-right: 32px; }
    span { position: absolute; top: 2px; transform: translateX(-50%); }
    i { position: absolute; top: 0; width: 1px; height: 2px; background: #7b98a8; }`, `<div></div>`,
    class extends HTMLElement {
        ready(root) {
            let s = "";
            for (let k = 0; k < 26; k++) {
                const left = ((79.7 - 23 + 58.8 * k) / 1545 * 100).toFixed(2);
                s += `<i style="left:${left}%"></i><span style="left:${left}%">${1982 + 2 * k}</span>`;
            }
            root.querySelector("div").innerHTML = s;
        }
    });

define("chart-workspace", `
    :host { display: flex; flex-direction: column; min-width: 0; min-height: 0; background: #fff; }
    .row { display: flex; min-height: 0; border-bottom: 1px solid #8aa0ac; }
    .row > :first-child { flex: 1; }`, `
    <div class="row" style="flex:522 1 0">
        <price-pane><indicator-tabs></indicator-tabs></price-pane>
        <value-axis span="522" rows="28|2,5;60|2,4;92|2,3;124|2,2;156|2,1;188|2;221|1,9;253|1,8;285|1,7;317|1,6;349|1,5;381|1,4;446|1,2;478|1,1;510|1;405|1,32008|#087008|1;411|1,30573|#c01010|1;418|1,30430|#8a5c08|1"></value-axis>
    </div>
    <div class="row" style="flex:100 1 0">
        <trains-pane><pane-title style="--chip:linear-gradient(90deg,#75909c 50%,#000 50%)">Sistema de trenes Doc v4 (f f)</pane-title></trains-pane>
        <value-axis span="100" rows="9|100||1;20|84,891||1;24|80||1;32|77,291|#e01010|1;43|60;60|40;52|50|#1010a8|1;69|30,536|#e01010|1;72|27,118||1;80|20||1;94|0||1"></value-axis>
    </div>
    <div class="row" style="flex:67 1 0">
        <willy-pane><pane-title>Willy Doc (t)</pane-title></willy-pane>
        <value-axis span="67" rows="5|0||1;18|-25|#1010a8|1;27|-35,764|#ff9408|1;36|-50|#1010a8|1;50|-75|#c01010|1;61|-100||1"></value-axis>
    </div>
    <div class="row" style="flex:74 1 0">
        <awesome-pane><pane-title>Awesome Evolution Doc</pane-title></awesome-pane>
        <value-axis span="74" rows="5|0,4;18|0,2;22|0,0804|#a008a0|1;31|0,0284|#50d850|1;38|0|#f010f0|1;46|-0,2;60|-0,4;69|-0,6"></value-axis>
    </div>
    <div class="row" style="flex:45 1 0">
        <strength-pane><pane-title style="--chip:linear-gradient(90deg,#000 50%,#75909c 50%)">Barra Fuerza Fondo Mercado v4 (f)</pane-title></strength-pane>
        <value-axis span="45" rows="4|0,505;24|0,5000||1;40|0,495"></value-axis>
    </div>
    <time-axis></time-axis>`);

// ---------- bottom bar ----------
const tool = (label, body) => `<button type="button" aria-label="${label}">${svg(body, 14)}</button>`;
define("bottom-bar", `
    :host { display: flex; align-items: center; height: 17px; gap: 4px; padding-left: 5px; border-top: 1px solid #56707f; background: linear-gradient(#a9c4d1, #8eacbb); overflow: hidden; }
    button { border: 0; padding: 0; background: none; display: grid; place-items: center; width: 14px; height: 15px; font: inherit; flex: none; }
    .nav { width: 10px; height: 10px; border: 1px solid #7390a0; background: #b9d1dc; }
    .scroll { flex: 1; display: flex; align-items: center; min-width: 0; }
    input { appearance: none; flex: 1; min-width: 0; height: 10px; margin: 0; border: 1px solid #7390a0; background: linear-gradient(90deg, #93b0be 9%, transparent 9%), linear-gradient(#bcdce9, #98bccc); }
    input::-webkit-slider-thumb { appearance: none; width: 1px; height: 9px; background: #6f8d9d; }
    .end { gap: 4px; display: flex; }`, `
    ${tool("Dibujar", P("M2 2l4 11 7-10", "#d05030", 1.300) + P("M6 14L13 2l2 2-7 11z", "#806010", .8, "#f0d030") + P("M1 5h4M2 8h5", "#222", 1))}
    ${tool("Compartir", P("M12 3L4 8l8 5", "#667", 1.200) + '<circle cx="12" cy="3" r="2.200" fill="#f4f4f4" stroke="#778"/><circle cx="4" cy="8" r="2.200" fill="#f4f4f4" stroke="#778"/><circle cx="12" cy="13" r="2.200" fill="#f4f4f4" stroke="#778"/>')}
    ${tool("Chat", P("M1 2h10v7H6l-2 2V9H1z", "#5080c0", 1, "#c8dcf4") + P("M5 6h10v7h-2v2l-2-2H5z", "#2a60c8", 1, "#4a80e0") + P("M7 9h6", "#fff", 1))}
    ${tool("Informe", P("M3 2h10v13H3z", "#556", 1, "#f2f2f2") + rect(6, 1, 4, 2, "#777") + rect(5, 5, 3, 3, "#d03030") + rect(8, 9, 3, 4, "#30a040") + P("M9 6h3M5 10h2", "#444", 1))}
    ${tool("Libro de órdenes", P("M2 3h7M2 6h9", "#e02828", 2) + P("M2 9h11M2 12h7M2 15h5", "#20a030", 2) + P("M12 1v14", "#206030", 1.200))}
    ${tool("Ventanas", P("M1 2h10v8H1z", "#1f62c0", 1, "#fff") + rect(1, 1, 10, 3, "#2a78e0") + P("M5 6h10v8H5z", "#1f62c0", 1, "#fff") + rect(5, 5, 10, 3, "#2a78e0") + P("M7 12l2-2 2 1 3-2", "#18a030", 1.200))}
    <span style="font-size:12px;font-weight:normal">«</span>
    <div class="scroll">
        <button type="button" class="nav" aria-label="Anterior"><svg width="5" height="6"><path d="M4 1L1.500 3 4 5" fill="none" stroke="#111" stroke-width="1.200"/></svg></button>
        <input type="range" min="0" max="100" value="9" aria-label="Desplazamiento">
        <button type="button" class="nav" aria-label="Siguiente"><svg width="5" height="6"><path d="M1 1l2.500 2L1 5" fill="none" stroke="#111" stroke-width="1.200"/></svg></button>
    </div>
    <div class="end">
        ${tool("Deshacer", P("M5 6h5c6 0 4 7 0 7", "#1a66d0", 2) + P("M1 6l5-4v8z", "#1a66d0", 1, "#1a66d0"))}
        ${tool("Rehacer", P("M11 6H6c-6 0-4 7 0 7", "#88a8c8", 2) + P("M15 6l-5-4v8z", "#88a8c8", 1, "#88a8c8"))}
        ${tool("Configurar", rect(8, 1, 7, 14, "#38b048") + rect(1, 9, 8, 6, "#c84848") + P("M3 13l7-7M9 3c3-2 5 1 4 4", "#222", 3) + P("M3 13l7-7M9 3c3-2 5 1 4 4", "#f4f4f4", 1.600))}
        ${tool("Ajustar", lens + P("M14 1v12M1 15h8", "#1a3ae0", 1.500) + P("M12 3l2-2 2 2M3 13l-2 2", "#1a3ae0", 1.200))}
        ${tool("Alejar", lens + P("M5 7h4", "#1a3ae0", 1.500))}
        ${tool("Acercar", lens + P("M5 7h4M7 5v4", "#1a3ae0", 1.500))}
        ${tool("Rango", P("M0 3h16M0 6h16", "#333", 1.500).replace("/>", ' stroke-dasharray="2 1.500"/>') + P("M8 8v5M5 11l3 3 3-3", "#1a66d0", 1.500))}
    </div>`);

define("trading-window", `
    :host { display: grid; grid-template: 19px minmax(0, 1fr) 17px / 23px minmax(0, 1fr); height: 100vh; }
    top-toolbar, bottom-bar { grid-column: 1 / -1; }`, `
    <top-toolbar></top-toolbar>
    <draw-tools></draw-tools>
    <chart-workspace></chart-workspace>
    <bottom-bar></bottom-bar>`);
</script>
</body>
</html>
